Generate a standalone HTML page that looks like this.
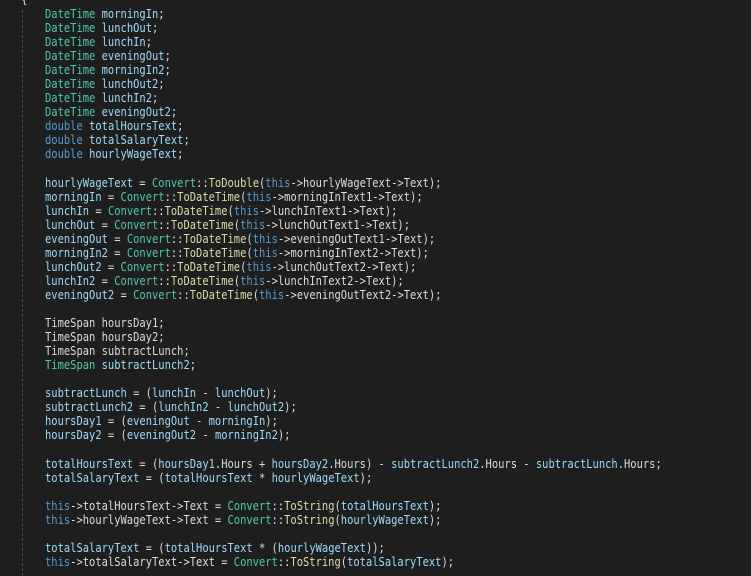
<!DOCTYPE html>
<html><head><meta charset="utf-8"><style>
html,body{margin:0;padding:0;background:#1e1e1e;width:751px;height:576px;overflow:hidden}
#c{position:absolute;left:45px;top:7px;font-family:"DejaVu Sans Mono","Liberation Mono",monospace;font-size:12px;line-height:14.05px;color:#dcdcdc;white-space:pre;transform:scaleX(0.871);transform-origin:0 0}
.t{color:#4ec9b0}.v{color:#9cdcfe}.k{color:#569cd6}.f{color:#dcdcaa}
#br{position:absolute;left:21px;top:-7px;font-family:"DejaVu Sans Mono",monospace;font-size:11px;color:#dcdcdc}
#g{position:absolute;left:22px;top:10px;height:566px;border-left:1px dashed #4a4a4a}
</style></head><body>
<div id="br">{</div><div id="g"></div>
<div id="c"><span class="t">DateTime</span> <span class="v">morningIn</span>;
<span class="t">DateTime</span> <span class="v">lunchOut</span>;
<span class="t">DateTime</span> <span class="v">lunchIn</span>;
<span class="t">DateTime</span> <span class="v">eveningOut</span>;
<span class="t">DateTime</span> <span class="v">morningIn2</span>;
<span class="t">DateTime</span> <span class="v">lunchOut2</span>;
<span class="t">DateTime</span> <span class="v">lunchIn2</span>;
<span class="t">DateTime</span> <span class="v">eveningOut2</span>;
<span class="k">double</span> <span class="v">totalHoursText</span>;
<span class="k">double</span> <span class="v">totalSalaryText</span>;
<span class="k">double</span> <span class="v">hourlyWageText</span>;

<span class="v">hourlyWageText</span> = <span class="t">Convert</span>::<span class="f">ToDouble</span>(<span class="k">this</span>-&gt;hourlyWageText-&gt;Text);
<span class="v">morningIn</span> = <span class="t">Convert</span>::<span class="f">ToDateTime</span>(<span class="k">this</span>-&gt;morningInText1-&gt;Text);
<span class="v">lunchIn</span> = <span class="t">Convert</span>::<span class="f">ToDateTime</span>(<span class="k">this</span>-&gt;lunchInText1-&gt;Text);
<span class="v">lunchOut</span> = <span class="t">Convert</span>::<span class="f">ToDateTime</span>(<span class="k">this</span>-&gt;lunchOutText1-&gt;Text);
<span class="v">eveningOut</span> = <span class="t">Convert</span>::<span class="f">ToDateTime</span>(<span class="k">this</span>-&gt;eveningOutText1-&gt;Text);
<span class="v">morningIn2</span> = <span class="t">Convert</span>::<span class="f">ToDateTime</span>(<span class="k">this</span>-&gt;morningInText2-&gt;Text);
<span class="v">lunchOut2</span> = <span class="t">Convert</span>::<span class="f">ToDateTime</span>(<span class="k">this</span>-&gt;lunchOutText2-&gt;Text);
<span class="v">lunchIn2</span> = <span class="t">Convert</span>::<span class="f">ToDateTime</span>(<span class="k">this</span>-&gt;lunchInText2-&gt;Text);
<span class="v">eveningOut2</span> = <span class="t">Convert</span>::<span class="f">ToDateTime</span>(<span class="k">this</span>-&gt;eveningOutText2-&gt;Text);

TimeSpan hoursDay1;
TimeSpan hoursDay2;
TimeSpan subtractLunch;
<span class="t">TimeSpan</span> <span class="v">subtractLunch2</span>;

<span class="v">subtractLunch</span> = (<span class="v">lunchIn</span> - <span class="v">lunchOut</span>);
<span class="v">subtractLunch2</span> = (<span class="v">lunchIn2</span> - <span class="v">lunchOut2</span>);
<span class="v">hoursDay1</span> = (<span class="v">eveningOut</span> - <span class="v">morningIn</span>);
<span class="v">hoursDay2</span> = (<span class="v">eveningOut2</span> - <span class="v">morningIn2</span>);

<span class="v">totalHoursText</span> = (<span class="v">hoursDay1</span>.Hours + <span class="v">hoursDay2</span>.Hours) - <span class="v">subtractLunch2</span>.Hours - <span class="v">subtractLunch</span>.Hours;
<span class="v">totalSalaryText</span> = (<span class="v">totalHoursText</span> * <span class="v">hourlyWageText</span>);

<span class="k">this</span>-&gt;totalHoursText-&gt;Text = <span class="t">Convert</span>::<span class="f">ToString</span>(<span class="v">totalHoursText</span>);
<span class="k">this</span>-&gt;hourlyWageText-&gt;Text = <span class="t">Convert</span>::<span class="f">ToString</span>(<span class="v">hourlyWageText</span>);

<span class="v">totalSalaryText</span> = (<span class="v">totalHoursText</span> * (<span class="v">hourlyWageText</span>));
<span class="k">this</span>-&gt;totalSalaryText-&gt;Text = <span class="t">Convert</span>::<span class="f">ToString</span>(<span class="v">totalSalaryText</span>);</div>
</body></html>
